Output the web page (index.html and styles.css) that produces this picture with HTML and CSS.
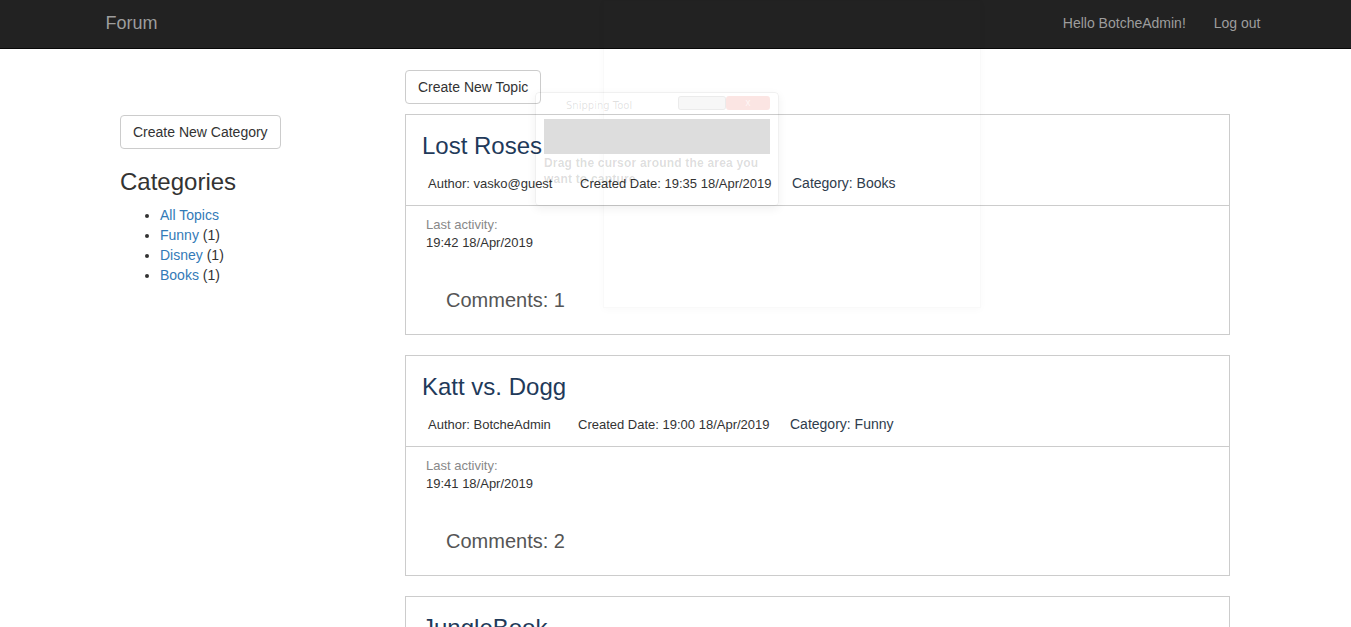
FILE: index.html
```html
<!DOCTYPE html>
<html lang="en">
<head>
<meta charset="utf-8">
<title>Forum</title>
<link rel="stylesheet" href="styles.css">
</head>
<body>
<nav class="navbar">
  <div class="nav-inner">
    <a class="brand" href="#">Forum</a>
    <div class="nav-right">
      <a class="nav-link" href="#">Hello BotcheAdmin!</a>
      <a class="nav-link" href="#">Log out</a>
    </div>
  </div>
</nav>

<div class="page">
  <aside class="sidebar">
    <button class="btn">Create New Category</button>
    <h3 class="side-title">Categories</h3>
    <ul class="cat-list">
      <li><a href="#">All Topics</a></li>
      <li><a href="#">Funny</a> (1)</li>
      <li><a href="#">Disney</a> (1)</li>
      <li><a href="#">Books</a> (1)</li>
    </ul>
  </aside>

  <main class="content">
    <button class="btn">Create New Topic</button>

    <div class="topic">
      <div class="topic-head">
        <h3 class="topic-title">Lost Roses</h3>
        <div class="meta">
          <span class="meta-author">Author: vasko@guest</span>
          <span class="meta-date">Created Date: 19:35 18/Apr/2019</span>
          <span class="meta-cat">Category: Books</span>
        </div>
      </div>
      <div class="topic-body">
        <div class="last-label">Last activity:</div>
        <div class="last-date">19:42 18/Apr/2019</div>
        <div class="comments">Comments: 1</div>
      </div>
    </div>

    <div class="topic">
      <div class="topic-head">
        <h3 class="topic-title">Katt vs. Dogg</h3>
        <div class="meta">
          <span class="meta-author meta-author-short">Author: BotcheAdmin</span>
          <span class="meta-date">Created Date: 19:00 18/Apr/2019</span>
          <span class="meta-cat">Category: Funny</span>
        </div>
      </div>
      <div class="topic-body">
        <div class="last-label">Last activity:</div>
        <div class="last-date">19:41 18/Apr/2019</div>
        <div class="comments">Comments: 2</div>
      </div>
    </div>

    <div class="topic">
      <div class="topic-head">
        <h3 class="topic-title">JungleBook</h3>
        <div class="meta">
          <span class="meta-author">Author: BotcheAdmin</span>
          <span class="meta-date">Created Date: 18:50 18/Apr/2019</span>
          <span class="meta-cat">Category: Disney</span>
        </div>
      </div>
    </div>
  </main>
</div>

<div class="ghost-window"></div>
<div class="snip">
  <div class="snip-bar">
    <span class="snip-name">Snipping Tool</span>
    <span class="snip-btns"><span class="snip-min"></span><span class="snip-close">x</span></span>
  </div>
  <div class="snip-tools"></div>
  <div class="snip-text">Drag the cursor around the area you want to capture</div>
</div>
</body>
</html>
```

FILE: styles.css
```css
* { box-sizing: border-box; }

html, body {
  margin: 0;
  padding: 0;
}

body {
  font-family: "Liberation Sans", Arial, Helvetica, sans-serif;
  font-size: 14px;
  line-height: 1.42857;
  color: #333;
  background: #fff;
  position: relative;
  overflow: hidden;
  height: 627px;
}

a { text-decoration: none; }

/* navbar */
.navbar {
  background: #222;
  border-bottom: 1px solid #080808;
  height: 49px;
}

.nav-inner {
  width: 1170px;
  margin: 0 auto;
  padding: 0 15px;
  height: 48px;
  display: flex;
  align-items: center;
  justify-content: space-between;
}

.brand {
  color: #9d9d9d;
  font-size: 18px;
  line-height: 20px;
  padding: 13px 15px 15px;
  margin-left: -15px;
}

.nav-right {
  display: flex;
  margin-right: -29px;
}

.nav-link {
  color: #9d9d9d;
  font-size: 14px;
  line-height: 20px;
  padding: 13px 14px 15px 14px;
}

/* page layout */
.page {
  display: flex;
  padding-left: 120px;
}

.sidebar {
  width: 285px;
  padding-top: 66px;
}

.content {
  width: 825px;
  padding-top: 21px;
}

.btn {
  display: inline-block;
  font-family: inherit;
  font-size: 14px;
  line-height: 20px;
  color: #333;
  background: #fff;
  border: 1px solid #ccc;
  border-radius: 4px;
  padding: 6px 12px;
  cursor: pointer;
}

.side-title {
  font-size: 24px;
  font-weight: 500;
  line-height: 1.1;
  margin: 20px 0 10px;
  color: #333;
}

.cat-list {
  margin: 0;
  padding-left: 40px;
  line-height: 20px;
}

.cat-list a { color: #337ab7; }

/* topics */
.topic {
  border: 1px solid #ccc;
  margin-top: 10px;
  margin-bottom: 20px;
}

.topic + .topic { margin-top: 0; }

.topic-head {
  padding: 18px 16px 11px;
  border-bottom: 1px solid #ccc;
}

.topic-title {
  margin: 0;
  font-size: 24px;
  font-weight: 500;
  line-height: 26px;
  color: #1f3a5a;
}

.meta {
  margin-top: 13px;
  display: flex;
  align-items: center;
  padding-left: 6px;
  line-height: 20px;
}

.meta-author {
  font-size: 13px;
  width: 152px;
  padding-top: 2px;
}

.meta-author-short { width: 150px; }

.meta-date {
  font-size: 13px;
  width: 212px;
  padding-top: 2px;
}

.meta-cat {
  font-size: 14px;
  color: #2e3c4c;
}

.topic-body {
  padding: 10px 20px 23px;
}

.last-label {
  font-size: 13px;
  line-height: 18px;
  color: #888;
}

.last-date {
  font-size: 13px;
  line-height: 18px;
  color: #333;
}

.comments {
  margin-top: 37px;
  padding-left: 20px;
  font-size: 20px;
  line-height: 22px;
  color: #555;
}

/* faint screenshot overlay (Snipping Tool ghost) */
.ghost-window {
  position: absolute;
  left: 603px;
  top: 0;
  width: 378px;
  height: 308px;
  border: 1px solid rgba(0, 0, 0, 0.025);
  box-shadow: 0 2px 8px rgba(0, 0, 0, 0.025);
  pointer-events: none;
}

.snip {
  position: absolute;
  left: 535px;
  top: 92px;
  width: 244px;
  height: 114px;
  border: 1px solid rgba(0, 0, 0, 0.06);
  border-radius: 4px;
  background: transparent;
  box-shadow: 0 3px 10px rgba(0, 0, 0, 0.06);
  padding: 0 8px;
  pointer-events: none;
}

.snip-bar {
  height: 26px;
  display: flex;
  align-items: center;
  justify-content: space-between;
}

.snip-name {
  font-family: "DejaVu Sans", sans-serif;
  font-size: 10px;
  color: rgba(0, 0, 0, 0.12);
  padding-left: 22px;
}

.snip-btns {
  display: flex;
  margin-top: -6px;
}

.snip-min {
  width: 48px;
  height: 14px;
  border: 1px solid rgba(0, 0, 0, 0.05);
  border-radius: 3px;
  background: rgba(0, 0, 0, 0.03);
}

.snip-close {
  width: 44px;
  height: 14px;
  border-radius: 3px;
  background: rgba(230, 80, 70, 0.15);
  color: rgba(255, 255, 255, 0.7);
  font-size: 10px;
  line-height: 14px;
  text-align: center;
}

.snip-tools {
  height: 35px;
  background: #dddddd;
}

.snip-text {
  font-size: 12px;
  font-weight: bold;
  line-height: 16px;
  color: rgba(0, 0, 0, 0.14);
  padding-top: 1px;
  letter-spacing: 0.2px;
}
```
